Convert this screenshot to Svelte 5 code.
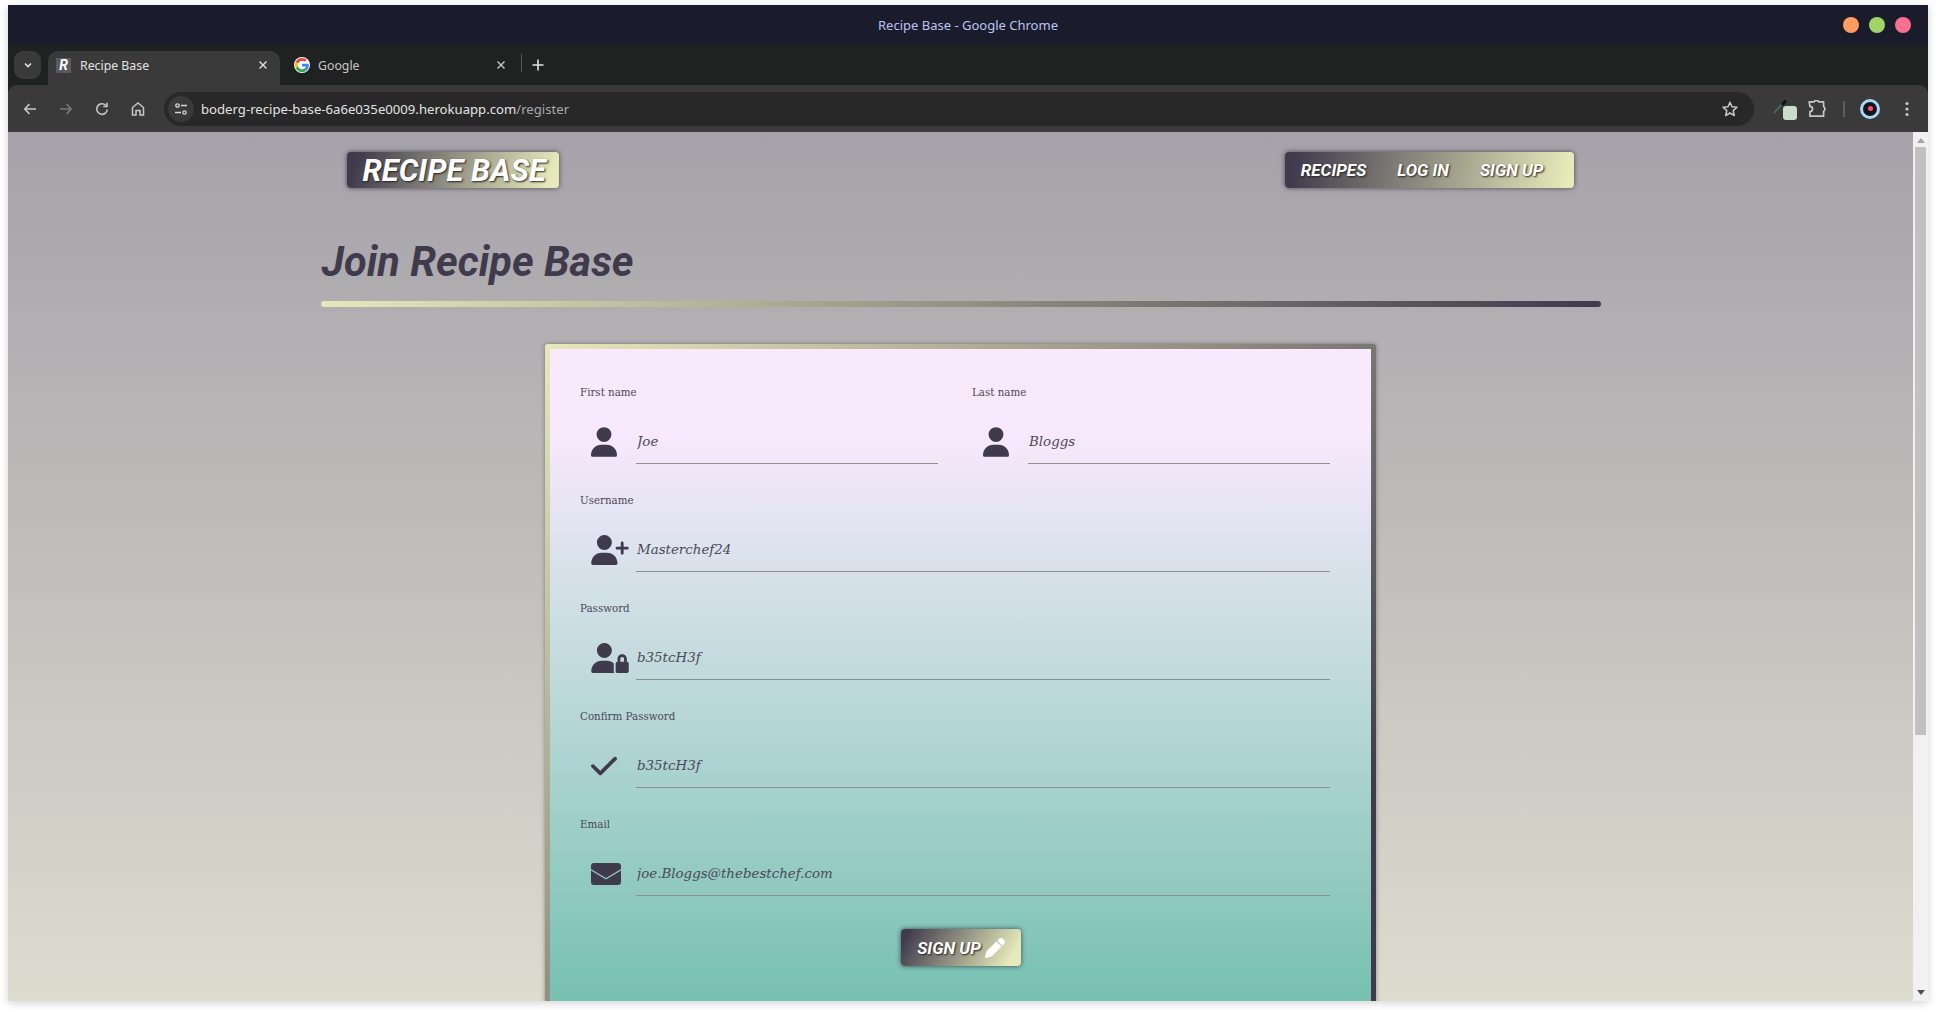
<script>
	const userPath =
		"M224 256A128 128 0 1 0 224 0a128 128 0 1 0 0 256zm-45.7 48C79.8 304 0 383.8 0 482.3C0 498.7 13.3 512 29.7 512H418.3c16.4 0 29.7-13.3 29.7-29.7C448 383.8 368.2 304 269.7 304H178.3z";
	const icons = {
		user: { box: "0 0 448 512", w: 26, d: userPath },
		plus: {
			box: "0 0 640 512",
			w: 38,
			d: "M96 128a128 128 0 1 1 256 0A128 128 0 1 1 96 128zM0 482.3C0 383.8 79.8 304 178.3 304h91.4C368.2 304 448 383.8 448 482.3c0 16.4-13.3 29.7-29.7 29.7H29.7C13.3 512 0 498.7 0 482.3zM504 312V248H440c-13.3 0-24-10.7-24-24s10.7-24 24-24h64V136c0-13.3 10.7-24 24-24s24 10.7 24 24v64h64c13.3 0 24 10.7 24 24s-10.7 24-24 24H552v64c0 13.3-10.7 24-24 24s-24-10.7-24-24z"
		},
		lock: {
			box: "0 0 640 512",
			w: 38,
			d: "M224 256A128 128 0 1 0 224 0a128 128 0 1 0 0 256zm-45.7 48C79.8 304 0 383.8 0 482.3C0 498.7 13.3 512 29.7 512H392.6c-5.4-9.4-8.6-20.3-8.6-32V352c0-2.1 .1-4.2 .3-6.3c-31-26-71-41.7-114.6-41.7H178.3zM528 240c17.7 0 32 14.3 32 32v48H496V272c0-17.7 14.3-32 32-32zm-80 32v48c-17.7 0-32 14.3-32 32V480c0 17.7 14.3 32 32 32H608c17.7 0 32-14.3 32-32V352c0-17.7-14.3-32-32-32V272c0-44.2-35.8-80-80-80s-80 35.8-80 80z"
		},
		check: {
			box: "0 0 448 512",
			w: 26,
			d: "M438.6 105.4c12.5 12.5 12.5 32.8 0 45.3l-256 256c-12.5 12.5-32.8 12.5-45.3 0l-128-128c-12.5-12.5-12.5-32.8 0-45.3s32.8-12.5 45.3 0L160 338.7 393.4 105.4c12.5-12.5 32.8-12.5 45.3 0z"
		}
	};

	const rows = [
		[
			{ label: "First name", icon: "user", hint: "Joe", type: "text" },
			{ label: "Last name", icon: "user", hint: "Bloggs", type: "text" }
		],
		[{ label: "Username", icon: "plus", hint: "Masterchef24", type: "text" }],
		[{ label: "Password", icon: "lock", hint: "b35tcH3f", type: "text" }],
		[{ label: "Confirm Password", icon: "check", hint: "b35tcH3f", type: "text" }],
		[{ label: "Email", icon: "mail", hint: "joe.Bloggs@thebestchef.com", type: "email" }]
	];
</script>

<div class="desktop">
	<div class="window">
		<div class="titlebar">
			<span class="title">Recipe Base - Google Chrome</span>
			<div class="lights">
				<i class="orange"></i>
				<i class="green"></i>
				<i class="pink"></i>
			</div>
		</div>

		<div class="tabstrip">
			<button class="tabsearch" aria-label="Search tabs">
				<svg width="10" height="10" viewBox="0 0 10 10"><path d="M2 3.5 5 6.5 8 3.5" fill="none" stroke="#e3e3e3" stroke-width="1.6" /></svg>
			</button>
			<div class="tab active">
				<span class="favicon-r">R</span>
				<span class="tabname">Recipe Base</span>
				<svg class="close" width="10" height="10" viewBox="0 0 10 10"><path d="M1.500 1.500l7 7M8.500 1.500l-7 7" stroke="#e3e3e3" stroke-width="1.400" /></svg>
			</div>
			<div class="tab">
				<svg class="favicon" width="16" height="16" viewBox="-3 -3 54 54">
					<circle cx="24" cy="24" r="27" fill="#fff" />
					<path fill="#EA4335" d="M24 9.5c3.54 0 6.71 1.22 9.21 3.6l6.85-6.85C35.9 2.38 30.47 0 24 0 14.62 0 6.51 5.38 2.56 13.22l7.98 6.19C12.43 13.72 17.74 9.5 24 9.5z" />
					<path fill="#4285F4" d="M46.98 24.55c0-1.57-.15-3.09-.38-4.55H24v9.02h12.94c-.58 2.96-2.26 5.48-4.78 7.18l7.73 6c4.51-4.18 7.09-10.36 7.09-17.65z" />
					<path fill="#FBBC05" d="M10.53 28.59c-.48-1.45-.76-2.99-.76-4.59s.27-3.14.76-4.59l-7.98-6.19C.92 16.46 0 20.12 0 24c0 3.88.92 7.54 2.56 10.78l7.97-6.19z" />
					<path fill="#34A853" d="M24 48c6.48 0 11.93-2.13 15.89-5.81l-7.73-6c-2.15 1.45-4.92 2.3-8.16 2.3-6.26 0-11.57-4.22-13.47-9.91l-7.98 6.19C6.51 42.62 14.62 48 24 48z" />
				</svg>
				<span class="tabname">Google</span>
				<svg class="close" width="10" height="10" viewBox="0 0 10 10"><path d="M1.500 1.500l7 7M8.500 1.500l-7 7" stroke="#c7c7c7" stroke-width="1.400" /></svg>
			</div>
			<span class="tabsep"></span>
			<svg class="newtab" width="14" height="14" viewBox="0 0 14 14"><path d="M7 1.500v11M1.500 7h11" stroke="#e3e3e3" stroke-width="1.600" /></svg>
		</div>

		<div class="toolbar">
			<div class="navbtns">
				<svg width="16" height="16" viewBox="0 0 16 16"><path d="M14 8H3M7.500 3 2.800 8l4.700 5" fill="none" stroke="#c7c7c7" stroke-width="1.600" /></svg>
				<svg width="16" height="16" viewBox="0 0 16 16"><path d="M2 8h11M8.500 3l4.700 5-4.700 5" fill="none" stroke="#7a7a7a" stroke-width="1.600" /></svg>
				<svg width="16" height="16" viewBox="0 0 16 16"><path d="M13.300 8.500A5.300 5.300 0 1 1 11.800 4.300M13 1.800v3.700H9.300" fill="none" stroke="#c7c7c7" stroke-width="1.600" /></svg>
				<svg width="16" height="16" viewBox="0 0 16 16"><path d="M2.500 14V6.500L8 2l5.500 4.500V14H10V9.500H6V14z" fill="none" stroke="#c7c7c7" stroke-width="1.500" /></svg>
			</div>
			<div class="omnibox">
				<span class="tune">
					<svg width="14" height="14" viewBox="0 0 14 14">
						<circle cx="3.500" cy="3.500" r="1.700" fill="none" stroke="#d5d5d5" stroke-width="1.300" />
						<path d="M7 3.500h6M1 10.500h6" stroke="#d5d5d5" stroke-width="1.300" />
						<circle cx="10.500" cy="10.500" r="1.700" fill="none" stroke="#d5d5d5" stroke-width="1.300" />
					</svg>
				</span>
				<span class="url">boderg-recipe-base-6a6e035e0009.herokuapp.com<span class="path">/register</span></span>
				<svg class="star" width="18" height="18" viewBox="0 0 18 18"><path d="M9 2.200 11 6.800l5 .5-3.800 3.300 1.100 4.900L9 13l-4.300 2.500 1.100-4.900L2 7.300l5-.5z" fill="none" stroke="#c7c7c7" stroke-width="1.500" stroke-linejoin="round" /></svg>
			</div>
			<div class="extras">
				<span class="dropper">
					<svg width="16" height="16" viewBox="0 0 16 16"><path d="M1 14 10 4" stroke="#3f7a5c" stroke-width="1.500" /><path d="M9 6 13 1.500" stroke="#111" stroke-width="3" /></svg>
					<i></i>
				</span>
				<svg width="18" height="18" viewBox="1 1.500 15 15"><path d="M2 3h4.200a2 2 0 0 1 3.600 0H14v4.200a2 2 0 0 1 0 3.600V15H2.600v-3.800a2.200 2.200 0 0 0 0-4.400z" fill="none" stroke="#c7c7c7" stroke-width="1.400" stroke-linejoin="round" /></svg>
				<span class="extsep"></span>
				<span class="avatar"><i></i></span>
				<svg width="4" height="16" viewBox="0 0 4 16"><circle cx="2" cy="2.500" r="1.600" fill="#c7c7c7" /><circle cx="2" cy="8" r="1.600" fill="#c7c7c7" /><circle cx="2" cy="13.500" r="1.600" fill="#c7c7c7" /></svg>
			</div>
		</div>

		<div class="viewport">
			<main class="page">
				<div class="container">
					<header class="topbar">
						<a class="brand">RECIPE BASE</a>
						<nav class="links">
							<a>RECIPES</a>
							<a>LOG IN</a>
							<a>SIGN UP</a>
						</nav>
					</header>

					<h1>Join Recipe Base</h1>
					<div class="rule"></div>

					<div class="card">
						<form class="card-inner">
							{#each rows as row}
								<div class="row">
									{#each row as field}
										<div class="field">
											<label for={field.label}>{field.label}</label>
											<div class="control">
												<span class="icon">
													{#if field.icon === "mail"}
														<svg width="30" height="22" viewBox="0 0 30 22">
															<mask id="mail-cut">
																<rect width="30" height="22" fill="white" />
																<path d="M0 6.700 15 15.700 30 6.700" fill="none" stroke="black" stroke-width="1.300" />
															</mask>
															<rect width="30" height="22" rx="3" fill="#3f3a4c" mask="url(#mail-cut)" />
														</svg>
													{:else}
														<svg width={icons[field.icon].w} height="30" viewBox={icons[field.icon].box}>
															<path d={icons[field.icon].d} fill="#3f3a4c" />
														</svg>
													{/if}
												</span>
												<input id={field.label} type={field.type} placeholder={field.hint} />
											</div>
										</div>
									{/each}
								</div>
							{/each}
							<div class="actions">
								<button type="button" class="signup">
									SIGN UP
									<svg width="20" height="20" viewBox="0 0 512 512">
										<path fill="#fff" d="M410.3 231l11.3-11.3-33.9-33.9-62.1-62.1L291.700 89.800l-11.300 11.300-22.600 22.600L58.600 322.900c-10.400 10.400-18 23.300-22.200 37.400L1 480.700c-2.500 8.400-.2 17.500 6.100 23.700s15.300 8.500 23.700 6.100l120.300-35.400c14.100-4.200 27-11.800 37.400-22.200L387.700 253.700 410.300 231zM362.700 18.700L348.300 33.200 325.700 55.800 314.300 67.100l33.900 33.900 62.100 62.100 33.900 33.900 11.300-11.300 22.600-22.600 14.500-14.500c25-25 25-65.500 0-90.500L453.300 18.700c-25-25-65.500-25-90.500 0z" />
									</svg>
								</button>
							</div>
						</form>
					</div>
				</div>
			</main>
			<div class="scrollbar">
				<span class="arrow up"></span>
				<span class="track"><span class="thumb"></span></span>
				<span class="arrow down"></span>
			</div>
		</div>
	</div>
</div>

<style>
	:global(body) {
		margin: 0;
		background: #fff;
	}

	.desktop {
		height: 1012px;
		box-sizing: border-box;
		padding: 5px 8px 11px 8px;
		overflow: hidden;
		font-family: "Noto Sans", sans-serif;
	}

	.window {
		height: 100%;
		display: flex;
		flex-direction: column;
		background: #202221;
		box-shadow: 0 2px 8px rgba(0, 0, 0, 0.18);
	}

	.titlebar {
		height: 40px;
		flex: none;
		background: #1b1c2b;
		display: flex;
		align-items: center;
		justify-content: center;
		position: relative;
	}

	.title {
		color: #b9c4f2;
		font-size: 13px;
	}

	.lights {
		position: absolute;
		right: 17px;
		top: 12px;
		display: flex;
		gap: 10px;
	}

	.lights i {
		width: 16px;
		height: 16px;
		border-radius: 50%;
	}

	.orange {
		background: #fe9d5f;
	}
	.green {
		background: #a0d468;
	}
	.pink {
		background: #fb7091;
	}

	.tabstrip {
		height: 40px;
		flex: none;
		background: #202221;
		display: flex;
		align-items: flex-end;
		color: #d6d6d6;
		font-size: 12.3px;
	}

	.tabsearch {
		width: 27px;
		height: 28px;
		margin: 0 7px 6px 6px;
		padding: 0;
		border: 0;
		border-radius: 9px;
		background: #3a3a3a;
		display: flex;
		align-items: center;
		justify-content: center;
	}

	.tab {
		width: 232px;
		height: 34px;
		box-sizing: border-box;
		padding: 0 12px 6px 8px;
		display: flex;
		align-items: center;
		gap: 9px;
		border-radius: 10px 10px 0 0;
	}

	.tab.active {
		background: #3a3a3a;
		color: #e3e3e3;
	}

	.tab + .tab {
		margin-left: 6px;
		gap: 8px;
		color: #c7c7c7;
	}

	.favicon-r {
		width: 15px;
		height: 15px;
		flex: none;
		background: #5a5860;
		color: #fff;
		font: italic 700 14px/15px Roboto, sans-serif;
		text-align: center;
	}

	.favicon {
		flex: none;
	}

	.tabname {
		flex: 1;
	}

	.close {
		flex: none;
	}

	.tabsep {
		width: 1px;
		height: 18px;
		margin: 0 0 13px 3px;
		background: #55585a;
	}

	.newtab {
		margin: 0 0 13px 9px;
	}

	.toolbar {
		height: 47px;
		flex: none;
		background: #3a3a3a;
		border-radius: 9px 9px 0 0;
		display: flex;
		align-items: center;
		box-sizing: border-box;
		padding: 0 14px;
	}

	.navbtns {
		display: flex;
		gap: 20px;
		margin-right: 18px;
	}

	.omnibox {
		flex: 1;
		height: 34px;
		background: #282828;
		border-radius: 17px;
		display: flex;
		align-items: center;
		padding: 0 15px 0 4px;
	}

	.tune {
		width: 26px;
		height: 26px;
		border-radius: 50%;
		background: #3a3a3a;
		display: flex;
		align-items: center;
		justify-content: center;
		margin-right: 7px;
	}

	.url {
		flex: 1;
		color: #e3e3e3;
		font-size: 13.15px;
	}

	.path {
		color: #a8a8a8;
	}

	.extras {
		width: 160px;
		flex: none;
		display: flex;
		align-items: center;
		padding-left: 19px;
		box-sizing: border-box;
	}

	.dropper {
		width: 24px;
		height: 22px;
		position: relative;
		margin-right: 11px;
	}

	.dropper i {
		position: absolute;
		right: 0;
		bottom: 0;
		width: 14px;
		height: 14px;
		border-radius: 3px;
		background: #cbdccb;
	}

	.extsep {
		width: 2px;
		height: 16px;
		background: #5e5e5e;
		margin: 0 15px 0 17px;
	}

	.avatar {
		width: 14px;
		height: 14px;
		border: 3px solid #a9d8f5;
		border-radius: 50%;
		background: #14141f;
		display: flex;
		align-items: center;
		justify-content: center;
		margin-right: 25px;
	}

	.avatar i {
		width: 5px;
		height: 5px;
		border-radius: 50%;
		background: #ff4d6a;
	}

	.viewport {
		flex: 1;
		min-height: 0;
		display: flex;
	}

	.page {
		flex: 1;
		min-width: 0;
		overflow: hidden;
		background: linear-gradient(#a5a2a9, #dcdccf);
	}

	.scrollbar {
		width: 15px;
		flex: none;
		background: #f1f1f1;
		display: flex;
		flex-direction: column;
		align-items: center;
	}

	.arrow {
		width: 0;
		height: 0;
		flex: none;
		border-left: 4px solid transparent;
		border-right: 4px solid transparent;
	}

	.arrow.up {
		margin-top: 6px;
		border-bottom: 5px solid #a3a3a3;
	}

	.arrow.down {
		margin-bottom: 6px;
		border-top: 5px solid #505050;
	}

	.track {
		flex: 1;
		width: 100%;
		padding-top: 4px;
		box-sizing: border-box;
	}

	.thumb {
		display: block;
		width: 11px;
		height: 588px;
		margin: 0 auto;
		background: #c1c1c1;
	}

	.container {
		width: 1280px;
		margin: 0 auto;
		font-family: Roboto, sans-serif;
	}

	.topbar {
		display: flex;
		justify-content: space-between;
		padding: 20px 27px 0 26px;
	}

	.brand {
		height: 36px;
		padding: 0 13px 0 16px;
		display: flex;
		align-items: center;
		border-radius: 4px;
		background: linear-gradient(110deg, #3f3a4c 5%, #e6e9b9 95%);
		box-shadow: 0 0 5px rgba(40, 36, 50, 0.75);
		color: #fff;
		font-style: italic;
		font-weight: 700;
		font-size: 31px;
		text-shadow: 1px 1px 2px #222;
	}

	.links {
		height: 36px;
		display: flex;
		align-items: center;
		gap: 31px;
		padding: 0 30px 0 16px;
		border-radius: 4px;
		background: linear-gradient(100deg, #3f3a4c 3%, #e6e9b9 97%);
		box-shadow: 0 0 5px rgba(40, 36, 50, 0.75);
	}

	.links a {
		color: #fff;
		font-style: italic;
		font-weight: 700;
		font-size: 17px;
		text-shadow: 1px 1px 2px #222;
	}

	h1 {
		margin: 46px 0 0 1px;
		height: 67px;
		line-height: 56px;
		color: #3f3a4c;
		font-style: italic;
		font-weight: 700;
		font-size: 41.5px;
	}

	.rule {
		height: 6px;
		border-radius: 3px;
		background: linear-gradient(90deg, #e6e9b9, #3f3a4c);
	}

	.card {
		width: 831px;
		margin: 37px auto 0;
		padding: 5px;
		box-sizing: border-box;
		border-radius: 3px;
		background: linear-gradient(135deg, #e6e9b9, #3f3a4c 85%);
		box-shadow: 0 0 4px rgba(60, 55, 70, 0.5);
	}

	.card-inner {
		padding: 35px 41px 50px 30px;
		background: linear-gradient(#f9e9fd 12%, #d3e0e8 36.5%, #76c1b1 98%);
	}

	.row {
		display: grid;
		grid-auto-flow: column;
		grid-auto-columns: 1fr;
		gap: 34px;
		margin-bottom: 28px;
	}

	.field label {
		display: block;
		height: 16px;
		line-height: 16px;
		color: #4c4859;
		font-family: "DejaVu Serif", serif;
		font-size: 10.3px;
	}

	.control {
		height: 64px;
		display: flex;
		align-items: flex-end;
	}

	.icon {
		width: 56px;
		height: 63px;
		flex: none;
		box-sizing: border-box;
		padding: 26px 0 0 11px;
	}

	.icon svg {
		display: block;
	}

	.icon svg[height="22"] {
		margin-top: 4px;
	}

	input {
		flex: 1;
		min-width: 0;
		height: 44px;
		box-sizing: border-box;
		padding: 0 0 0 1px;
		border: 0;
		border-bottom: 1px solid #8f8f8f;
		background: none;
		outline: none;
		font-family: "DejaVu Serif", serif;
		font-style: italic;
		font-size: 13.4px;
	}

	input::placeholder {
		color: #4c4859;
		opacity: 1;
	}

	.actions {
		display: flex;
		justify-content: center;
		padding: 5px 0 0 12px;
	}

	.signup {
		width: 120px;
		height: 37px;
		padding: 0;
		border: 0;
		border-radius: 4px;
		display: flex;
		align-items: center;
		justify-content: center;
		gap: 4px;
		background: linear-gradient(120deg, #3f3a4c 5%, #e6e9b9 90%);
		box-shadow: 0 0 5px rgba(40, 36, 50, 0.8);
		color: #fff;
		font-family: Roboto, sans-serif;
		font-style: italic;
		font-weight: 700;
		font-size: 17px;
		text-shadow: 1px 1px 2px #222;
	}
</style>
